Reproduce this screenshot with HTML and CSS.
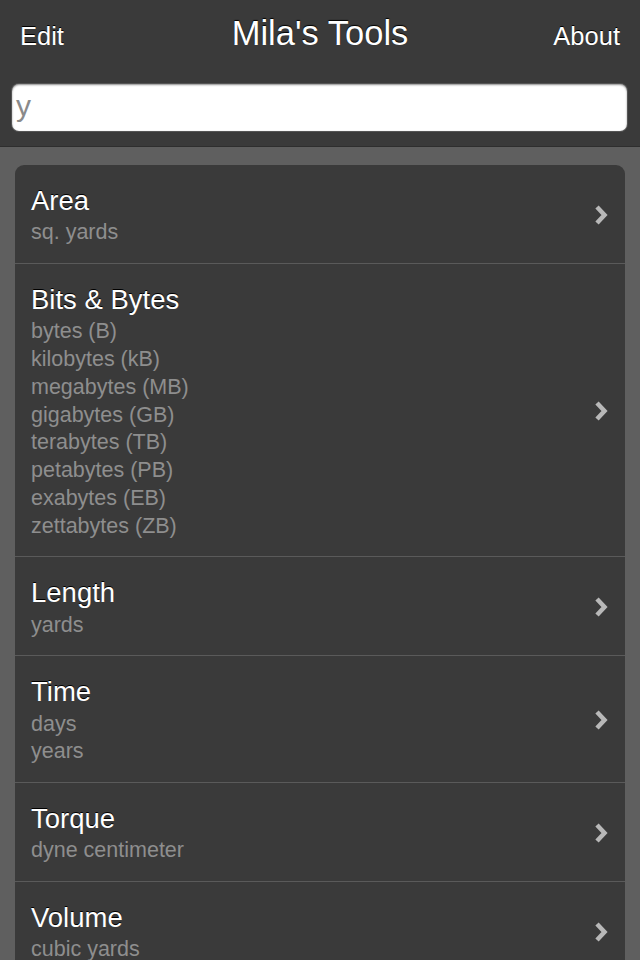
FILE: index.html
```html
<!DOCTYPE html>
<html>
<head>
<meta charset="utf-8">
<link rel="stylesheet" href="styles.css">
</head>
<body>
<header class="topbar">
  <div class="navrow">
    <span class="navbtn">Edit</span>
    <span class="navtitle">Mila's Tools</span>
    <span class="navbtn navright">About</span>
  </div>
  <div class="searchbox">y</div>
</header>
<main class="content">
  <ul class="card">
    <li class="row">
      <div class="rowtext"><div class="rtitle">Area</div><div class="rsub">sq. yards</div></div>
      <svg class="chev" viewBox="0 0 14 22"><path d="M3 3 L10.5 11 L3 19" /></svg>
    </li>
    <li class="row">
      <div class="rowtext"><div class="rtitle">Bits &amp; Bytes</div>
        <div class="rsub">bytes (B)</div>
        <div class="rsub">kilobytes (kB)</div>
        <div class="rsub">megabytes (MB)</div>
        <div class="rsub">gigabytes (GB)</div>
        <div class="rsub">terabytes (TB)</div>
        <div class="rsub">petabytes (PB)</div>
        <div class="rsub">exabytes (EB)</div>
        <div class="rsub">zettabytes (ZB)</div>
      </div>
      <svg class="chev" viewBox="0 0 14 22"><path d="M3 3 L10.5 11 L3 19" /></svg>
    </li>
    <li class="row">
      <div class="rowtext"><div class="rtitle">Length</div><div class="rsub">yards</div></div>
      <svg class="chev" viewBox="0 0 14 22"><path d="M3 3 L10.5 11 L3 19" /></svg>
    </li>
    <li class="row">
      <div class="rowtext"><div class="rtitle">Time</div><div class="rsub">days</div><div class="rsub">years</div></div>
      <svg class="chev" viewBox="0 0 14 22"><path d="M3 3 L10.5 11 L3 19" /></svg>
    </li>
    <li class="row">
      <div class="rowtext"><div class="rtitle">Torque</div><div class="rsub">dyne centimeter</div></div>
      <svg class="chev" viewBox="0 0 14 22"><path d="M3 3 L10.5 11 L3 19" /></svg>
    </li>
    <li class="row">
      <div class="rowtext"><div class="rtitle">Volume</div><div class="rsub">cubic yards</div></div>
      <svg class="chev" viewBox="0 0 14 22"><path d="M3 3 L10.5 11 L3 19" /></svg>
    </li>
  </ul>
</main>
</body>
</html>
```
FILE: styles.css
```css
html, body {
  margin: 0;
  padding: 0;
  height: 100%;
  overflow: hidden;
  background: #5f5f5f;
  font-family: "Liberation Sans", Arial, sans-serif;
}
.topbar {
  background: #3a3a3a;
  height: 146px;
  border-bottom: 1px solid #2e2e2e;
  box-sizing: content-box;
  padding: 0 12px 0 12px;
}
.navrow {
  display: grid;
  grid-template-columns: 1fr auto 1fr;
  align-items: center;
  height: 72px;
  padding: 0 8px;
}
.navbtn {
  color: #fff;
  font-size: 25.5px;
  text-shadow: 0 -1px 0 #000;
}
.navright {
  justify-self: end;
}
.navtitle {
  color: #fff;
  font-size: 34.5px;
  text-shadow: 0 -1px 1px #000;
  margin-top: -6px;
}
.searchbox {
  margin-top: 12px;
  height: 47px;
  background: #fff;
  border-radius: 7px;
  box-shadow: inset 0 1px 2px rgba(0,0,0,0.45), 0 0 0 1px #555;
  color: #8a8a8a;
  font-size: 30px;
  line-height: 44px;
  padding-left: 4px;
  box-sizing: border-box;
  width: 615px;
}
.content {
  padding: 18px 15px 0 15px;
}
.card {
  list-style: none;
  margin: 0;
  padding: 0;
  background: #3a3a3a;
  border-radius: 9px 9px 0 0;
}
.row {
  display: flex;
  align-items: center;
  padding: 18px 16px 16px 16px;
  border-bottom: 1px solid #5a5a5a;
}
.rowtext {
  flex: 1;
}
.rtitle {
  color: #fff;
  font-size: 27.5px;
  line-height: 36.25px;
  text-shadow: 0 -1px 0 #000;
}
.rsub {
  color: #8e8e8e;
  font-size: 21.5px;
  line-height: 27.75px;
}
.chev {
  width: 14px;
  height: 22px;
  margin-right: 1px;
  fill: none;
  stroke: #b8b8b8;
  stroke-width: 4.5;
  stroke-linejoin: miter;
  stroke-linecap: butt;
}
```
